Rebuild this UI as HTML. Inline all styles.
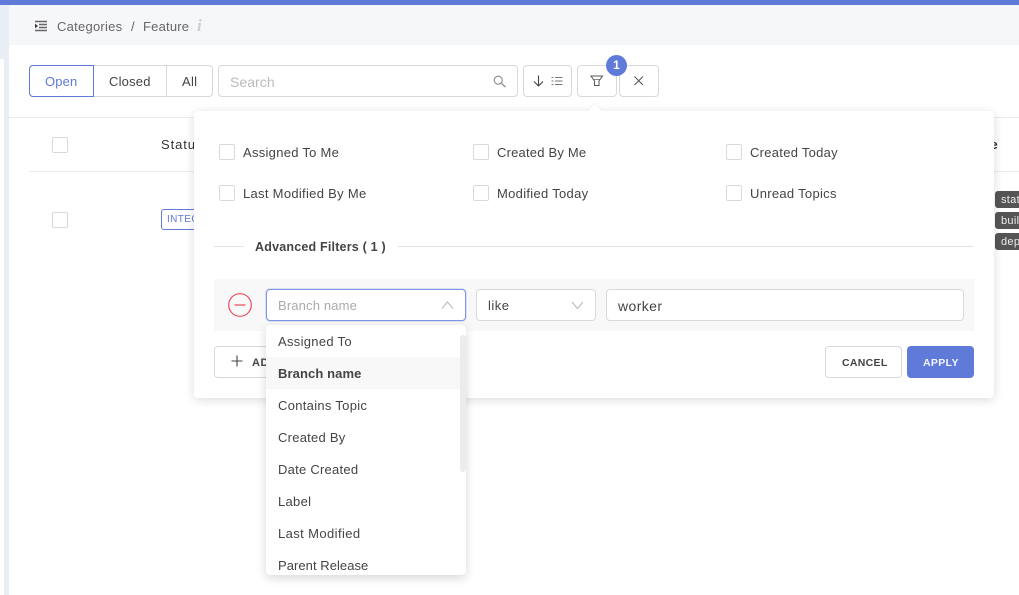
<!DOCTYPE html>
<html><head><meta charset="utf-8">
<style>
html,body{margin:0;padding:0}
body{width:1019px;height:595px;position:relative;overflow:hidden;background:#fff;font-family:"Liberation Sans",sans-serif;color:#444;font-size:13px}
.a{position:absolute;box-sizing:border-box}
.t{position:absolute;white-space:nowrap;line-height:16px;letter-spacing:.3px;font-size:13px}
.b{position:absolute;box-sizing:border-box;border:1px solid #d9d9d9;border-radius:4px;background:#fff}
.cb{position:absolute;box-sizing:border-box;width:16px;height:16px;border:1px solid #d9d9d9;border-radius:2px;background:#fff}
.tag{position:absolute;left:995px;width:40px;height:17px;background:#555;border-radius:3px;color:#eee;font-size:11px;line-height:18px;padding-left:6px;box-sizing:border-box;letter-spacing:.3px}
svg{position:absolute;overflow:visible}
</style></head><body>
<div class="a" style="left:0;top:0;width:1019px;height:5px;background:#5f7ad8"></div>
<div class="a" style="left:0;top:5px;width:9px;height:590px;background:#e8edf6"></div>
<div class="a" style="left:0;top:59px;width:4px;height:536px;background:#fff"></div>
<div class="a" style="left:9px;top:5px;width:1010px;height:40px;background:#f6f7f9"></div>

<svg style="left:34px;top:20px" width="14" height="12" viewBox="0 0 14 12"><path d="M1 1.5H13M5 4.5H13M5 7.5H13M1 10.5H13" stroke="#666" stroke-width="1.4" fill="none"/><path d="M1 3.8L4 6L1 8.2Z" fill="#333"/></svg>
<div class="t" style="left:57px;top:19px;color:#666;letter-spacing:.25px">Categories</div>
<div class="t" style="left:131px;top:19px;color:#666">/</div>
<div class="t" style="left:143px;top:19px;color:#666;letter-spacing:.2px">Feature</div>
<div class="t" style="left:197px;top:16px;color:#ccd0d4;font:italic bold 17px 'Liberation Serif',serif">i</div>

<div class="b" style="left:29px;top:65px;width:184px;height:32px"></div>
<div class="a" style="left:29px;top:65px;width:65px;height:32px;border:1px solid #5f7ad8;border-radius:4px 0 0 4px"></div>
<div class="a" style="left:166px;top:65px;width:1px;height:32px;background:#d9d9d9"></div>
<div class="t" style="left:45px;top:74px;color:#5f7ad8;letter-spacing:.15px">Open</div>
<div class="t" style="left:109px;top:74px;letter-spacing:.2px">Closed</div>
<div class="t" style="left:182px;top:74px">All</div>

<div class="b" style="left:218px;top:65px;width:300px;height:32px"></div>
<div class="t" style="left:230px;top:74px;color:#bbb;font-size:14px;letter-spacing:.05px">Search</div>
<svg style="left:493px;top:75px" width="14" height="14" viewBox="0 0 14 14"><circle cx="5.2" cy="5.2" r="4" stroke="#888" stroke-width="1.1" fill="none"/><path d="M8.2 8.2L12.5 12" stroke="#888" stroke-width="1.2"/></svg>

<div class="b" style="left:523px;top:65px;width:49px;height:32px"></div>
<svg style="left:532px;top:75px" width="32" height="14" viewBox="0 0 32 14"><path d="M6.5 .5V11M2 6.5L6.5 11L11 6.5" stroke="#444" stroke-width="1.1" fill="none"/><path d="M23 2.5H30.5M23 6H30.5M23 9.5H30.5" stroke="#777" stroke-width="1"/><path d="M19.5 2.5H21.5M19.5 6H21.5M19.5 9.5H21.5" stroke="#777" stroke-width="1"/></svg>
<div class="b" style="left:577px;top:65px;width:40px;height:32px"></div>
<svg style="left:590px;top:75px" width="14" height="13" viewBox="0 0 14 13"><path d="M1 1H12.5L9 6V10.5H4.5V6Z" stroke="#555" stroke-width="1" fill="none"/><path d="M3.5 4.5H10" stroke="#555" stroke-width=".7"/></svg>
<div class="b" style="left:619px;top:65px;width:40px;height:32px"></div>
<svg style="left:634px;top:76px" width="10" height="10" viewBox="0 0 10 10"><path d="M.5.5L9 9M9 .5L.5 9" stroke="#555" stroke-width="1"/></svg>
<div class="a" style="left:606px;top:54.5px;width:21px;height:21px;border-radius:50%;background:#5f7ad8;color:#fff;font-size:12px;font-weight:bold;line-height:21px;text-align:center">1</div>

<div class="a" style="left:9px;top:117px;width:1010px;height:1px;background:#ebebeb"></div>
<div class="a" style="left:29px;top:171px;width:990px;height:1px;background:#ebebeb"></div>
<div class="cb" style="left:52px;top:137px"></div>
<div class="cb" style="left:52px;top:212px"></div>
<div class="t" style="left:161px;top:137px;color:#333;letter-spacing:.9px">Status</div>
<div class="a" style="left:161px;top:209px;width:50px;height:21px;border:1px solid #5f7ad8;border-radius:3px;color:#5f7ad8;font-size:10px;line-height:19px;padding-left:5px;letter-spacing:.4px">INTEGRATION</div>
<div class="t" style="left:950px;top:137px;width:48px;text-align:right;color:#333;font-weight:bold">Image</div>
<div class="tag" style="top:191px">status</div>
<div class="tag" style="top:212px">build</div>
<div class="tag" style="top:233px">deploy</div>

<div class="a" style="left:194px;top:111px;width:800px;height:287px;background:#fff;border-radius:4px;box-shadow:0 2px 10px rgba(0,0,0,.14)"></div>
<div class="a" style="left:590px;top:106px;width:10px;height:10px;background:#fff;transform:rotate(45deg);box-shadow:-1px -1px 2px rgba(0,0,0,.04)"></div>

<div class="cb" style="left:219px;top:144px"></div><div class="t" style="left:243px;top:145px;letter-spacing:.28px">Assigned To Me</div>
<div class="cb" style="left:473px;top:144px"></div><div class="t" style="left:497px;top:145px;letter-spacing:.2px">Created By Me</div>
<div class="cb" style="left:726px;top:144px"></div><div class="t" style="left:750px;top:145px;letter-spacing:.28px">Created Today</div>
<div class="cb" style="left:219px;top:185px"></div><div class="t" style="left:243px;top:186px">Last Modified By Me</div>
<div class="cb" style="left:473px;top:185px"></div><div class="t" style="left:497px;top:186px">Modified Today</div>
<div class="cb" style="left:726px;top:185px"></div><div class="t" style="left:750px;top:186px">Unread Topics</div>

<div class="a" style="left:214px;top:246px;width:30px;height:1px;background:#e3e3e3"></div>
<div class="t" style="left:255px;top:239px;font-weight:bold;font-size:12.5px;letter-spacing:.2px">Advanced Filters ( 1 )</div>
<div class="a" style="left:398px;top:246px;width:576px;height:1px;background:#e3e3e3"></div>

<div class="a" style="left:214px;top:279px;width:760px;height:52px;background:#f8f8f8"></div>
<svg style="left:228px;top:293px" width="24" height="24" viewBox="0 0 24 24"><circle cx="12" cy="12" r="11.3" stroke="#ea4a60" stroke-width="1.2" fill="none"/><path d="M6.5 12H17.5" stroke="#ea4a60" stroke-width="1.2"/></svg>
<div class="b" style="left:266px;top:289px;width:200px;height:32px;border-color:#7f95e4;box-shadow:0 0 0 1px rgba(95,122,216,.18)"></div>
<div class="t" style="left:278px;top:298px;color:#aaa;letter-spacing:.15px">Branch name</div>
<svg style="left:441px;top:300px" width="13" height="10" viewBox="0 0 13 10"><path d="M1 8.5L6.5 2L12 8.5" stroke="#bbb" stroke-width="1.1" fill="none"/></svg>
<div class="b" style="left:476px;top:289px;width:120px;height:32px"></div>
<div class="t" style="left:488px;top:298px;letter-spacing:.5px">like</div>
<svg style="left:571px;top:300px" width="13" height="10" viewBox="0 0 13 10"><path d="M1 2L6.5 8.5L12 2" stroke="#bbb" stroke-width="1.1" fill="none"/></svg>
<div class="b" style="left:606px;top:289px;width:358px;height:32px"></div>
<div class="t" style="left:618px;top:298px;font-size:14px;letter-spacing:.4px">worker</div>

<div class="b" style="left:214px;top:346px;width:60px;height:32px"></div>
<svg style="left:231px;top:355px" width="12" height="12" viewBox="0 0 12 12"><path d="M6 .5V11.5M.5 6H11.5" stroke="#444" stroke-width="1.1"/></svg>
<div class="t" style="left:252px;top:355px;font-size:11px;font-weight:bold;letter-spacing:.5px">AD</div>

<div class="b" style="left:825px;top:346px;width:77px;height:32px"></div>
<div class="t" style="left:842px;top:355px;font-size:10.5px;font-weight:bold;letter-spacing:.3px">CANCEL</div>
<div class="a" style="left:907px;top:346px;width:67px;height:32px;background:#5f7ad8;border-radius:4px"></div>
<div class="t" style="left:923px;top:355px;font-size:10.5px;font-weight:bold;letter-spacing:.35px;color:#f4f6ff">APPLY</div>

<div class="a" style="left:266px;top:325px;width:200px;height:250px;background:#fff;border-radius:4px;box-shadow:0 3px 10px rgba(0,0,0,.16);overflow:hidden">
  <div class="a" style="left:0;top:32px;width:194px;height:32px;background:#f8f8f8"></div>
  <div class="a" style="left:194px;top:10px;width:6px;height:137px;background:#ececec;border-radius:3px"></div>
  <div class="t" style="left:12px;top:9px">Assigned To</div>
  <div class="t" style="left:12px;top:41px;font-weight:bold;letter-spacing:.1px">Branch name</div>
  <div class="t" style="left:12px;top:73px">Contains Topic</div>
  <div class="t" style="left:12px;top:105px;letter-spacing:.25px">Created By</div>
  <div class="t" style="left:12px;top:137px;letter-spacing:.25px">Date Created</div>
  <div class="t" style="left:12px;top:169px">Label</div>
  <div class="t" style="left:12px;top:201px;letter-spacing:.4px">Last Modified</div>
  <div class="t" style="left:12px;top:233px;letter-spacing:.05px">Parent Release</div>
</div>
</body></html>
